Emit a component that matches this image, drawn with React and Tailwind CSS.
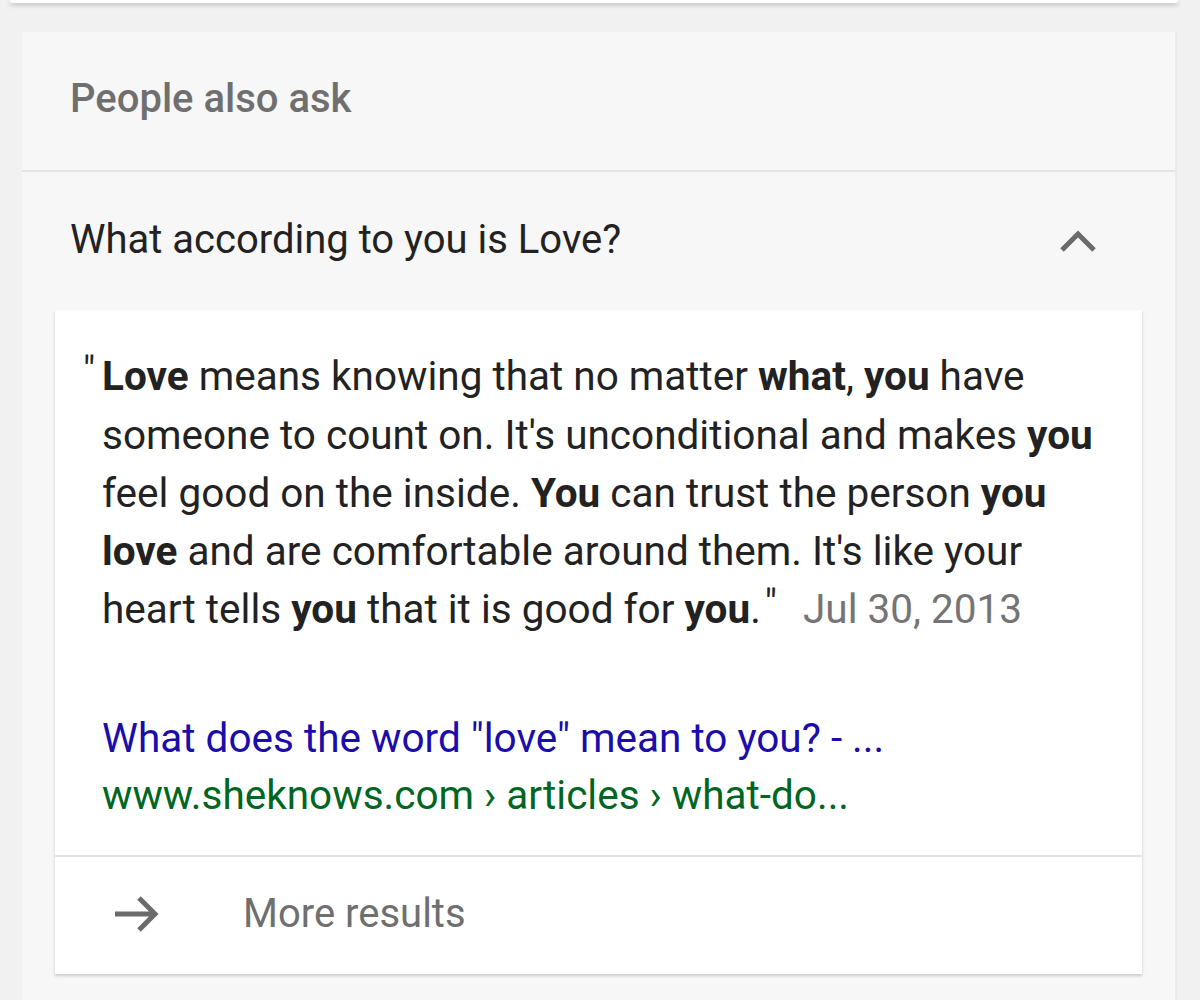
export default function App() {
	return (
		<div className="min-h-[1000px] w-[1200px] overflow-hidden bg-[#f1f1f1] font-['Roboto',sans-serif]">
			<div className="mx-[10px] mr-[22px] h-[3px] rounded-b-[3px] bg-white shadow-[0_2px_4px_rgba(0,0,0,0.25)]" />

			<section className="ml-[22px] mr-[23px] mt-[29px] border-r-2 border-[#ebebeb] bg-[#f7f7f7]">
				<div className="flex h-[140px] items-center border-b-2 border-[#e4e4e4] pb-[5px] pl-[48px]">
					<h2 className="text-[40px] font-medium text-[#6f6f6f]">People also ask</h2>
				</div>

				<div className="flex h-[138px] items-center justify-between pb-[2px] pl-[48px] pr-[78px]">
					<h3 className="text-[40px] text-[#222]">What according to you is Love?</h3>
					<svg className="mt-[2px]" width="38" height="24" viewBox="0 0 38 24" fill="none">
						<path d="M3 21 L19 5 L35 21" stroke="#6b6b6b" strokeWidth="5" />
					</svg>
				</div>

				<div className="mx-[33px] mb-[22px] bg-white shadow-[0_2px_3px_rgba(0,0,0,0.18)]">
					<div className="border-b-2 border-[#e3e3e3] pb-[31px] pl-[47px] pr-[40px] pt-[37px]">
						<p className="text-[40.5px] leading-[58px] text-[#222]">
							<span className="relative -top-[6px] -ml-[19px] inline-block w-[19px] text-[38px]">"</span>
							<b>Love</b> means knowing that no matter <b>what</b>, <b>you</b> have someone to count on. It's unconditional and makes <b>you</b> feel good on the inside. <b>You</b> can trust the person <b>you</b> <b>love</b> and are comfortable around them. It's like your heart tells <b>you</b> that it is good for <b>you</b>.<span className="relative -top-[6px] ml-[4px] text-[38px]">"</span><span className="ml-[26px] text-[#757575]">Jul 30, 2013</span>
						</p>

						<div className="mt-[71px] text-[40.5px] leading-[57px]">
							<div className="text-[#1a0dab]">What does the word "love" mean to you? - ...</div>
							<div className="text-[#006621]">www.sheknows.com › articles › what-do...</div>
						</div>
					</div>

					<div className="flex h-[117px] items-center pb-[4px]">
						<svg className="ml-[58px]" width="48" height="48" viewBox="0 0 48 48" fill="none">
							<path d="M2 24 H42 M26 8 L42 24 L26 40" stroke="#6b6b6b" strokeWidth="5" />
						</svg>
						<span className="ml-[82px] text-[40px] text-[#6f6f6f]">More results</span>
					</div>
				</div>
				<div className="h-[30px]" />
			</section>
		</div>
	);
}
